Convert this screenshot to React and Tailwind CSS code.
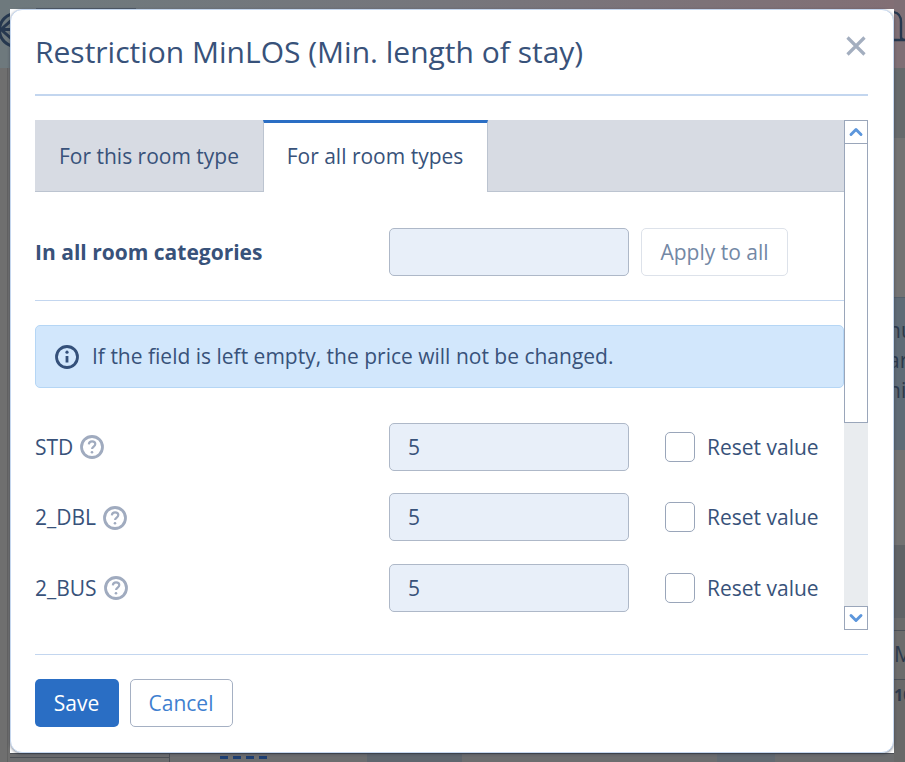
import React from 'react';
import { ChevronUp, ChevronDown } from 'lucide-react';

const rooms = ['STD', '2_DBL', '2_BUS'];

const InfoIcon = () => (
  <svg width="24" height="24" viewBox="0 0 24 24" fill="none" stroke="#34507a" className="shrink-0">
    <circle cx="12" cy="12" r="10.5" strokeWidth="2.8" />
    <path d="M12 11v6.5" strokeWidth="2.8" />
    <circle cx="12" cy="7.2" r="1.6" fill="#34507a" stroke="none" />
  </svg>
);

const HelpIcon = () => (
  <svg width="24" height="24" viewBox="0 0 24 24" fill="none" stroke="#a0abbf" className="shrink-0">
    <circle cx="12" cy="12" r="10.5" strokeWidth="2.8" />
    <path d="M8.8 9.4c.2-1.9 1.5-3 3.3-3 1.9 0 3.2 1.1 3.2 2.7 0 2.4-3.2 2.5-3.2 4.9" strokeWidth="2.2" />
    <circle cx="12" cy="17.2" r="1.3" fill="#a0abbf" stroke="none" />
  </svg>
);

const RoomRow = ({ name }) => (
  <div className="flex h-[48px] items-center shrink-0">
    <div className="flex w-[354px] items-center gap-[7px] pt-[1px]">
      <span>{name}</span>
      <HelpIcon />
    </div>
    <div className="flex h-[48px] w-[240px] items-center rounded-[5px] border border-[#aeb8c8] bg-[#e8eff9] pl-[18px] pt-[1px]">5</div>
    <div className="ml-[36px] h-[30px] w-[30px] rounded-[5px] border border-[#9aa6ba] bg-white" />
    <span className="ml-[12px] pt-[1px]">Reset value</span>
  </div>
);

// dimmed page behind the dialog, only the edges are visible
const Backdrop = () => (
  <div className="flex h-full text-[21px] text-[#2d3a4c]">
    <div className="flex w-[10px] shrink-0 flex-col overflow-hidden">
      <div className="h-[68px] bg-[#6e797d]">
        <svg width="34" height="60" viewBox="0 0 34 60" fill="none" stroke="#26384f" strokeWidth="3" className="max-w-none">
          <circle cx="16" cy="30" r="16.5" />
          <path d="M14 18 1 29.5 14 41M1 29.5h20" />
        </svg>
      </div>
      <div className="flex-1 bg-[#6f6f6f]">
        <div className="ml-[7px] h-full w-px bg-[#626262]" />
      </div>
    </div>

    <div className="flex flex-1 flex-col justify-between">
      <div className="h-[9px] bg-[linear-gradient(90deg,#6e797d_0%,#76767c_50%,#826f75_100%)]">
        <div className="ml-[26px] mt-[8px] h-px w-[100px] bg-[#4f5a66]" />
      </div>
      <div className="flex h-[9px] border-t border-[#4b4f55] bg-[#6c6d6f]">
        <div className="h-full w-[160px] border-r border-[#4b4f55]">
          <div className="mt-[3px] h-px bg-[#4b4f55]" />
        </div>
        <div className="ml-[50px] mt-[2px] flex gap-[5px]">
          <div className="h-[3px] w-[8px] bg-[#1d3f73]" />
          <div className="h-[3px] w-[8px] bg-[#1d3f73]" />
          <div className="h-[3px] w-[8px] bg-[#1d3f73]" />
          <div className="h-[3px] w-[8px] bg-[#1d3f73]" />
        </div>
        <div className="ml-[100px] h-full w-[95px] bg-[#5f666e]" />
        <div className="ml-[255px] h-full w-[58px] bg-[#626a72]" />
      </div>
    </div>

    <div className="flex w-[11px] shrink-0 flex-col overflow-hidden">
      <div className="h-[68px] bg-[#7f6f75]">
        <svg width="11" height="68" viewBox="0 0 11 68" fill="none" stroke="#26384f" strokeWidth="2.4">
          <path d="M-1 12c5 .5 8 4 8 10v15q0 3 4 3H-1" />
        </svg>
      </div>
      <div className="h-[70px] bg-[#666a6c]" />
      <div className="h-[159px] bg-[#737373]" />
      <div className="flex h-[153px] flex-col gap-[6px] border-t border-[#54606c] bg-[#5f6b76] pt-[20px] leading-[24px]">
        <span className="-ml-[6px]">nu</span>
        <span className="-ml-[6px]">ar</span>
        <span className="-ml-[6px]">ni</span>
      </div>
      <div className="h-[95px] bg-[#727272]" />
      <div className="h-[73px] bg-[#606366]" />
      <div className="h-[12px] bg-[#6b6b6b]" />
      <div className="flex h-[50px] items-center border-y border-[#4c5158] bg-[#6c6c6c]">M</div>
      <div className="flex-1 bg-[#696969] pt-[4px] text-[16px] font-bold leading-[22px]">10</div>
    </div>
  </div>
);

export default function App() {
  return (
    <div className="relative h-[762px] w-[905px] overflow-hidden font-['Open_Sans',sans-serif] text-[21px] text-[#38527a]">
      <Backdrop />
      <div className="absolute left-[10px] top-[9px] flex h-[744px] w-[884px] flex-col rounded-[12px] border border-[#c4d6ee] bg-white pl-[24px] pr-[25px] shadow-[0_1px_3px_rgba(30,40,60,0.5)]">
        <div className="relative h-[86px] shrink-0 border-b-2 border-[#c3d6ef]">
          <h2 className="pt-[20px] text-[30px] font-normal leading-[44px]">Restriction MinLOS (Min. length of stay)</h2>
          <button className="absolute right-[2px] top-[26px]">
            <svg width="20" height="20" viewBox="0 0 20 20" fill="none" stroke="#a3aebf" strokeWidth="3.2">
              <path d="M1.5 1.5l17 17M18.5 1.5l-17 17" />
            </svg>
          </button>
        </div>

        <div className="mt-[24px] flex h-[510px] shrink-0">
          <div className="flex h-full w-[809px] flex-col overflow-hidden">
            <div className="flex h-[72px] shrink-0 bg-[#d7dbe3]">
              <div className="flex w-[228px] items-center justify-center border-b border-[#bcc4d0] pt-[3px]">For this room type</div>
              <div className="flex w-[225px] items-center justify-center border-t-[3px] border-r border-l border-[#bcc4d0] border-t-[#2a6ec4] bg-white pb-[1px] pr-[1px]">For all room types</div>
              <div className="flex-1 border-b border-[#bcc4d0]" />
            </div>

            <div className="mt-[36px] flex h-[48px] shrink-0 items-center">
              <span className="w-[354px] pt-[1px] font-bold">In all room categories</span>
              <div className="h-[48px] w-[240px] rounded-[5px] border border-[#aeb8c8] bg-[#e8eff9]" />
              <button className="ml-[12px] h-[48px] w-[147px] rounded-[5px] border border-[#dde2ea] pt-[1px] text-[#7388a5]">Apply to all</button>
            </div>

            <div className="mt-[24px] h-px shrink-0 bg-[#c3d6ef]" />

            <div className="mt-[24px] flex h-[63px] shrink-0 items-center gap-[13px] rounded-[5px] border border-[#b5d6f5] bg-[#d2e7fc] pl-[19px]">
              <InfoIcon />
              <span>If the field is left empty, the price will not be changed.</span>
            </div>

            <div className="mt-[34.8px] flex flex-col gap-[22.5px]">
              {rooms.map(name => <RoomRow key={name} name={name} />)}
            </div>
          </div>

          <div className="flex h-full w-[24px] flex-col bg-[#e9ecef]">
            <div className="flex h-[24px] items-center justify-center border border-[#9aa6ba] bg-white text-[#5c96dc]">
              <ChevronUp size={20} strokeWidth={3.5} />
            </div>
            <div className="h-[279px] border border-t-0 border-[#9aa6ba] bg-white" />
            <div className="flex-1" />
            <div className="flex h-[24px] items-center justify-center border border-[#9aa6ba] bg-white text-[#5c96dc]">
              <ChevronDown size={20} strokeWidth={3.5} />
            </div>
          </div>
        </div>

        <div className="mt-[24px] h-px shrink-0 bg-[#c3d6ef]" />

        <div className="mt-[24px] flex gap-[11px]">
          <button className="h-[48px] w-[84px] rounded-[5px] bg-[#2a6ec4] pt-[1px] pr-[1px] text-white">Save</button>
          <button className="h-[48px] w-[103px] rounded-[5px] border border-[#a5b0c3] bg-white pt-[1px] pr-[1px] text-[#3f7fd0]">Cancel</button>
        </div>
      </div>
    </div>
  );
}
